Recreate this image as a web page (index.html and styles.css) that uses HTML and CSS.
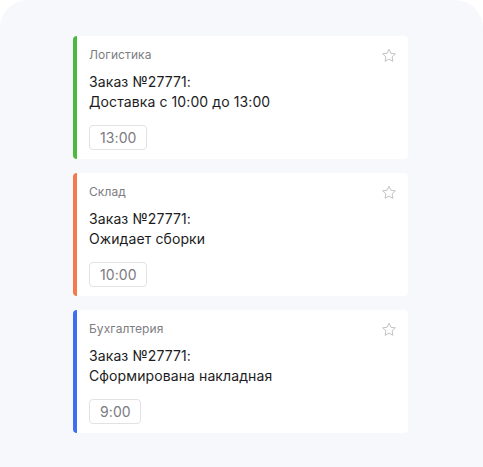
FILE: index.html
```html
<!DOCTYPE html>
<html lang="ru">
<head>
<meta charset="utf-8">
<link rel="stylesheet" href="styles.css">
</head>
<body>
<div class="panel">
  <div class="list">
    <div class="card card--green">
      <div class="card__head">
        <span class="card__cat">Логистика</span>
        <svg class="star" width="16" height="15" viewBox="0 0 16 15"><path d="M8 1.2l1.95 4.1 4.45.55-3.3 3.05.85 4.4L8 11.1l-3.95 2.2.85-4.4L1.6 5.85l4.45-.55z" fill="none" stroke="#c3c3c6" stroke-width="1" stroke-linejoin="round"/></svg>
      </div>
      <div class="card__title">Заказ №27771:<br>Доставка с 10:00 до 13:00</div>
      <div class="badge">13:00</div>
    </div>
    <div class="card card--orange">
      <div class="card__head">
        <span class="card__cat">Склад</span>
        <svg class="star" width="16" height="15" viewBox="0 0 16 15"><path d="M8 1.2l1.95 4.1 4.45.55-3.3 3.05.85 4.4L8 11.1l-3.95 2.2.85-4.4L1.6 5.85l4.45-.55z" fill="none" stroke="#c3c3c6" stroke-width="1" stroke-linejoin="round"/></svg>
      </div>
      <div class="card__title">Заказ №27771:<br>Ожидает сборки</div>
      <div class="badge">10:00</div>
    </div>
    <div class="card card--blue">
      <div class="card__head">
        <span class="card__cat">Бухгалтерия</span>
        <svg class="star" width="16" height="15" viewBox="0 0 16 15"><path d="M8 1.2l1.95 4.1 4.45.55-3.3 3.05.85 4.4L8 11.1l-3.95 2.2.85-4.4L1.6 5.85l4.45-.55z" fill="none" stroke="#c3c3c6" stroke-width="1" stroke-linejoin="round"/></svg>
      </div>
      <div class="card__title">Заказ №27771:<br>Сформирована накладная</div>
      <div class="badge">9:00</div>
    </div>
  </div>
</div>
</body>
</html>
```
FILE: styles.css
```css
html, body {
  margin: 0;
  padding: 0;
  background: #ffffff;
}
body {
  font-family: Inter, "Noto Sans", sans-serif;
}
.panel {
  background: #f7f8fc;
  border-radius: 28px 28px 0 0;
  min-height: 467px;
  padding: 36px 0 0 73px;
  box-sizing: border-box;
}
.list {
  width: 335px;
  display: flex;
  flex-direction: column;
  gap: 14px;
}
.card {
  background: #ffffff;
  border-radius: 4px;
  border-left: 4px solid #4cba3e;
  padding: 11px 12px 10px 12px;
  height: 123px;
  box-sizing: border-box;
}
.card--green { border-left-color: #4cba3e; }
.card--orange { border-left-color: #f57a4b; }
.card--blue { border-left-color: #3e6ef4; }
.card__head {
  display: flex;
  justify-content: space-between;
  align-items: flex-start;
  height: 16px;
}
.card__cat {
  font-size: 12px;
  line-height: 16px;
  letter-spacing: 0.1px;
  color: #7d7d82;
}
.star {
  margin-top: 1px;
  margin-right: -1px;
}
.card__title {
  margin-top: 9px;
  font-size: 14px;
  line-height: 20px;
  letter-spacing: 0.1px;
  color: #1c1c1e;
}
.badge {
  display: inline-block;
  margin-top: 13px;
  height: 25px;
  box-sizing: border-box;
  border: 1px solid #e2e2e6;
  border-radius: 4px;
  padding: 0 9px 0 10px;
  font-size: 14px;
  line-height: 23px;
  letter-spacing: 0.1px;
  color: #7b7b80;
}
```
